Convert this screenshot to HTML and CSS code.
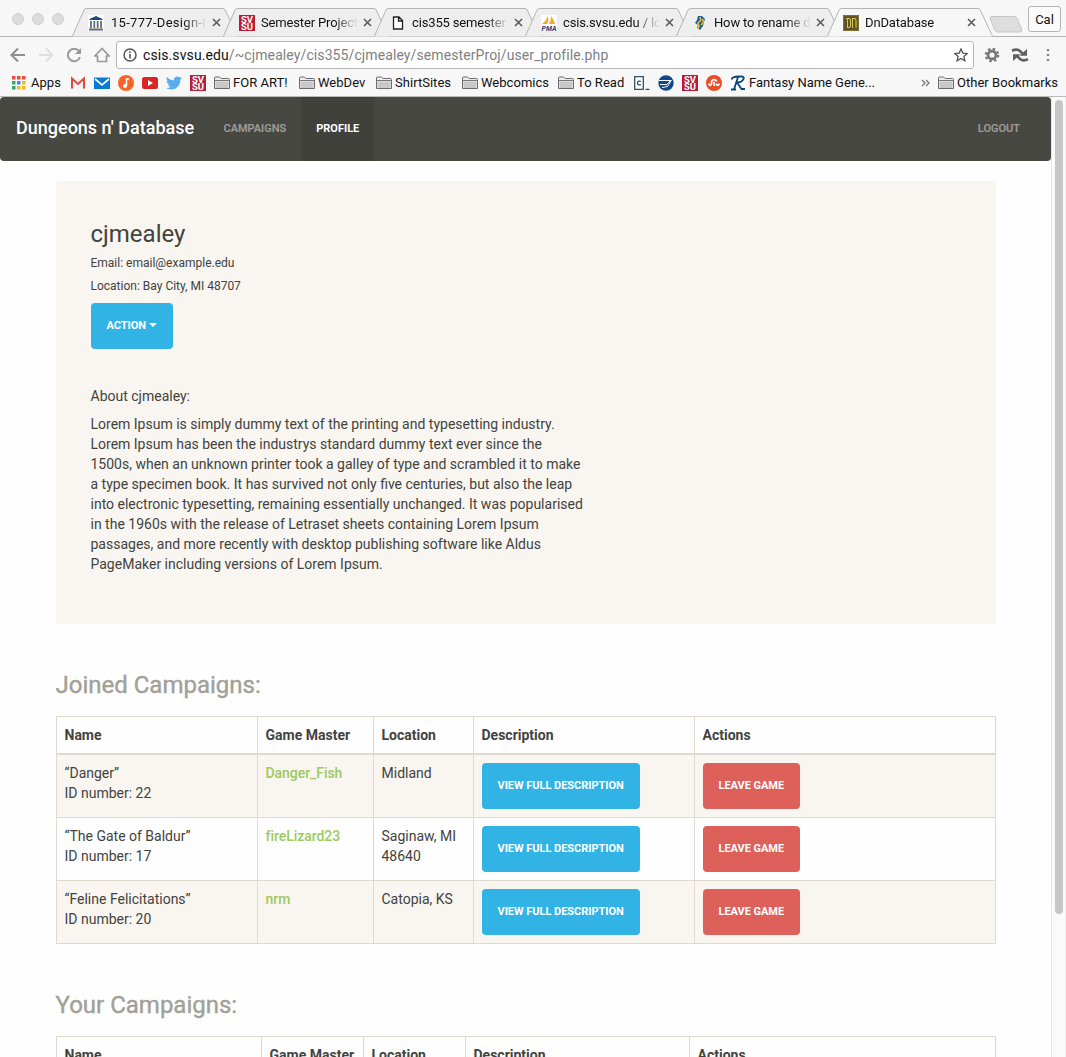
FILE: index.html
```html
<!DOCTYPE html>
<html lang="en">
<head>
<meta charset="utf-8">
<title>DnDatabase</title>
<link rel="stylesheet" href="styles.css">
</head>
<body>
<svg class="defs" width="0" height="0" aria-hidden="true">
  <symbol id="tab" viewBox="0 0 166 29"><path class="tab-fill" d="M0 28.500L12 2Q12.700 .5 14.500 .5H151Q152.500 .5 153.200 2L166 28.500Z"/><path d="M.3 28.500L12 2Q12.700 .5 14.500 .5H151Q152.500 .5 153.200 2L165.700 28.500" fill="none" stroke="#b3b3b3"/></symbol>
  <symbol id="close" viewBox="0 0 9 9"><path d="M1 1l7 7M8 1L1 8" stroke="#5c5c5c" stroke-width="1.600"/></symbol>
  <symbol id="folder" viewBox="0 0 16 14"><path d="M.5 12.500V2Q.5 1 1.500 1H5.500L7 2.500H14.500Q15.500 2.500 15.500 3.500V12.500Z" fill="#eee" stroke="#6b6b6b"/><path d="M1.500 5.500H14.500V12H1.500Z" fill="#c8c8c8"/><path d="M1 4.500H15" stroke="#777"/></symbol>
</svg>

<header class="browser">
  <div class="tabstrip">
    <div class="lights"><i></i><i></i><i></i></div>
    <div class="tabs">
      <div class="tab"><svg class="shape"><use href="#tab"/></svg>
        <svg class="fav" viewBox="0 0 16 16"><path fill="#fff" d="M0 0h16v16H0z"/><path d="M1 5Q2 3 5 2.500L8 1L11 2.500Q14 3 15 5Z" fill="#17497c"/><path d="M3 6v7M6.300 6v7M9.700 6v7M13 6v7" stroke="#607080" stroke-width="1.800"/><path d="M1 14.500h14" stroke="#666" stroke-width="2"/></svg>
        <span class="title t1">15-777-Design-I</span><svg class="x"><use href="#close"/></svg></div>
      <div class="tab"><svg class="shape"><use href="#tab"/></svg><svg class="fav svsu" viewBox="0 0 16 16"><path d="M0 0h16v16H0z"/><text x="2" y="7.500" textLength="12" lengthAdjust="spacingAndGlyphs">SV</text><text x="2" y="14.500" textLength="12" lengthAdjust="spacingAndGlyphs">SU</text></svg><span class="title">Semester Project</span><svg class="x"><use href="#close"/></svg></div>
      <div class="tab"><svg class="shape"><use href="#tab"/></svg>
        <svg class="fav" viewBox="0 0 16 16"><path d="M3.500 2H9L12.500 5.500V14H3.500ZM8.500 2V6H12.500" fill="#fff" stroke="#222" stroke-width="1.300"/></svg>
        <span class="title">cis355 semester</span><svg class="x"><use href="#close"/></svg></div>
      <div class="tab"><svg class="shape"><use href="#tab"/></svg>
        <svg class="fav" viewBox="0 0 16 16"><path fill="#fff" d="M0 0h16v16H0z"/><path d="M7 1Q8 6 6 9H1Q5 6 7 1ZM10 1Q13 5 14 9H8Q10 6 10 1Z" fill="#f7a724"/><text class="pma" x="0.500" y="16" textLength="15" lengthAdjust="spacingAndGlyphs">PMA</text></svg>
        <span class="title">csis.svsu.edu / lo</span><svg class="x"><use href="#close"/></svg></div>
      <div class="tab"><svg class="shape"><use href="#tab"/></svg>
        <svg class="fav" viewBox="0 0 16 16"><path d="M6 1h4l3 3-1 3-1 4-3 4-3-2 1-3-3-2 2-3z" fill="#17659b"/><path d="M8 2l1 3-3 3 1 3-1 3M11 4v4l-2 2" fill="none" stroke="#f2bb35" stroke-width="1.500"/></svg>
        <span class="title">How to rename d</span><svg class="x"><use href="#close"/></svg></div>
      <div class="tab active"><svg class="shape"><use href="#tab"/></svg>
        <svg class="fav" viewBox="0 0 16 16"><path fill="#5c4d29" d="M0 0h16v16H0z"/><path d="M.7.7h14.600v14.600H.7z" fill="none" stroke="#887939"/><path d="M3 3.500h3.500l1 1.500v6l-1 1.500H4.500V3.500M9.500 13V3.500h2.500l1 1.500v8" fill="none" stroke="#d6c64a" stroke-width="1.100"/></svg>
        <span class="title">DnDatabase</span><svg class="x"><use href="#close"/></svg></div>
    </div>
    <svg class="newtab" viewBox="0 0 34 17"><path d="M3 .5H25Q27.500 .5 28.500 3L32.500 13Q33.500 16 31 16H9Q6.500 16 5.500 13.500L1.200 3Q.3.5 3 .5Z" fill="#ddd" stroke="#c6c6c6"/></svg>
    <div class="user">Cal</div>
  </div>

  <div class="toolbar">
    <svg viewBox="0 0 16 16"><path d="M15 8H2M8 1.500L1.500 8L8 14.500" fill="none" stroke="#8e8e8e" stroke-width="2"/></svg>
    <svg viewBox="0 0 16 16"><path d="M1 8H14M8 1.500L14.500 8L8 14.500" fill="none" stroke="#dfdfdf" stroke-width="2"/></svg>
    <svg viewBox="0 0 16 16"><path d="M13 4.200A6.200 6.200 0 1 0 14 10" fill="none" stroke="#999" stroke-width="2"/><path d="M15 1V7H9Z" fill="#999"/></svg>
    <svg viewBox="0 0 16 16"><path d="M8 1.500L.9 9H3.500V14.500H12.500V9H15.100Z" fill="none" stroke="#999" stroke-width="1.700"/></svg>
    <div class="address">
      <svg viewBox="0 0 14 14"><circle cx="7" cy="7" r="6" fill="none" stroke="#555" stroke-width="1.500"/><path d="M7 6v4.500M7 3.300v1.700" stroke="#555" stroke-width="1.600"/></svg>
      <span class="url"><b>csis.svsu.edu</b>/~cjmealey/cis355/cjmealey/semesterProj/user_profile.php</span>
      <svg viewBox="0 0 14 14"><path d="M7 1L8.800 5.100L13.200 5.500L9.900 8.400L10.900 12.800L7 10.500L3.100 12.800L4.100 8.400L.8 5.500L5.200 5.100Z" fill="none" stroke="#555" stroke-width="1.300"/></svg>
    </div>
    <svg class="gear" viewBox="0 0 16 16"><circle cx="8" cy="8" r="4" fill="none" stroke="#777" stroke-width="2.800"/><circle cx="8" cy="8" r="6.200" fill="none" stroke="#777" stroke-width="2.200" stroke-dasharray="2.435"/></svg>
    <svg class="sync" viewBox="0 0 18 16"><path d="M1 3.700Q6 1.500 9 4L12.500 7.500M17 12.300Q12 14.500 9 12L5.500 8.500" fill="none" stroke="#606060" stroke-width="2.600"/><path d="M16 2V8.800H8.500ZM2 14V7.200H9.500Z" fill="#606060"/></svg>
    <svg class="dots" viewBox="0 0 4 14"><path d="M.8 1h2.400v2H.8zM.8 6h2.400v2H.8zM.8 11h2.400v2H.8z" fill="#858585"/></svg>
  </div>

  <nav class="bookmarks">
    <span><svg viewBox="0 0 14 14" class="apps"><path d="M0 0h3.500v3.500H0zM5 0h3.500v3.500H5zM10 0h3.500v3.500H10z" fill="#e94b3c"/><path d="M0 5h3.500v3.500H0z" fill="#36a565"/><path d="M5 5h3.500v3.500H5z" fill="#368df5"/><path d="M10 5h3.500v3.500H10zM5 10h3.500v3.500H5zM10 10h3.500v3.500H10z" fill="#f5b921"/><path d="M0 10h3.500v3.500H0z" fill="#36a565"/></svg><em>Apps</em></span>
    <span><svg viewBox="0 0 16 16"><path d="M2 3h12v10.500H2z" fill="#f2f2f2"/><path d="M2 13.500V3.500L8 9L14 3.500V13.500" fill="none" stroke="#db4b3f" stroke-width="2"/></svg></span>
    <span><svg viewBox="0 0 16 16"><path d="M0 2.500h16v11.500H0z" fill="#087ad0"/><path d="M1 4L8 10L15 4" fill="none" stroke="#fff" stroke-width="1.700"/></svg></span>
    <span><svg viewBox="0 0 16 16"><circle cx="8" cy="8" r="8" fill="#fa6426"/><path d="M8.500 11V4H11" fill="none" stroke="#fff" stroke-width="1.500"/><circle cx="7" cy="11" r="2" fill="#fff"/></svg></span>
    <span><svg viewBox="0 0 16 16"><rect y="2" width="16" height="12" rx="2.500" fill="#d92525"/><path d="M6 5v6l5-3z" fill="#fff"/></svg></span>
    <span><svg viewBox="0 0 24 24"><path d="M23.950 4.570a10 10 0 0 1-2.820.77 4.960 4.960 0 0 0 2.160-2.720c-.95.550-2 .950-3.130 1.180a4.920 4.920 0 0 0-8.380 4.480C7.690 8.090 4.070 6.130 1.640 3.160a4.820 4.820 0 0 0-.67 2.480c0 1.710.87 3.210 2.190 4.100a4.900 4.900 0 0 1-2.230-.62v.06a4.920 4.920 0 0 0 3.950 4.830 5 5 0 0 1-2.210.08 4.940 4.940 0 0 0 4.600 3.420A9.870 9.870 0 0 1 0 19.540a14 14 0 0 0 7.550 2.210c9.050 0 14-7.500 14-13.980l-.02-.63a10 10 0 0 0 2.420-2.570z" fill="#55acee"/></svg></span>
    <span><svg class="svsu" viewBox="0 0 16 16"><path d="M0 0h16v16H0z"/><text x="2" y="7.500" textLength="12" lengthAdjust="spacingAndGlyphs">SV</text><text x="2" y="14.500" textLength="12" lengthAdjust="spacingAndGlyphs">SU</text></svg></span>
    <span><svg class="folder"><use href="#folder"/></svg><em>FOR ART!</em></span>
    <span><svg class="folder"><use href="#folder"/></svg><em>WebDev</em></span>
    <span><svg class="folder"><use href="#folder"/></svg><em>ShirtSites</em></span>
    <span><svg class="folder"><use href="#folder"/></svg><em>Webcomics</em></span>
    <span><svg class="folder"><use href="#folder"/></svg><em>To Read</em></span>
    <span><svg viewBox="0 0 16 16"><path d="M.7 1.700h8.600v12.600H.7z" fill="#fff" stroke="#335064" stroke-width="1.300"/><path d="M7 6.500Q3.500 5.500 3.500 8t3.500 1.700M11.500 14.300h4" fill="none" stroke="#335064" stroke-width="1.300"/></svg></span>
    <span><svg viewBox="0 0 16 16"><circle cx="8" cy="8" r="7.700" fill="#10468a"/><path d="M1 5.500H12.500L9 9.500H2M4 12.500L9.500 11.500L13.500 5" fill="none" stroke="#fff"/></svg></span>
    <span><svg class="svsu" viewBox="0 0 16 16"><path d="M0 0h16v16H0z"/><text x="2" y="7.500" textLength="12" lengthAdjust="spacingAndGlyphs">SV</text><text x="2" y="14.500" textLength="12" lengthAdjust="spacingAndGlyphs">SU</text></svg></span>
    <span><svg viewBox="0 0 16 16"><circle cx="8" cy="8" r="8" fill="#eb4b27"/><path d="M3 8.500v.8q1.200 2 2.500 0V7q0-2.300 2.500-2.300T10.500 6.500M8 6.800v2.500q1 2 0 0M13 8.500v.8q-1.200 2-2.500 0V8.500" fill="none" stroke="#fff" stroke-width="1.700"/></svg></span>
    <span><svg viewBox="0 0 16 16"><path fill="#fff" d="M0 0h16v16H0z"/><path d="M1.500 4.500Q2.500 1.500 8 1.500H12Q15.500 2 12.500 5.500Q11 7.500 7 7.500L11.500 14H15M8 2L4 14.500M1 14.500h5" fill="none" stroke="#074778" stroke-width="1.800"/></svg><em class="tight">Fantasy Name Gene...</em></span>
    <span><svg viewBox="0 0 9 8" class="more"><path d="M1 1l3 3-3 3M5 1l3 3-3 3" fill="none" stroke="#777" stroke-width="1.300"/></svg></span>
    <span><svg class="folder"><use href="#folder"/></svg><em>Other Bookmarks</em></span>
  </nav>
</header>

<div class="viewport">
  <main class="page">
    <nav class="navbar"><a class="brand">Dungeons n' Database</a><a class="link">Campaigns</a><a class="link current">Profile</a><a class="link logout">Logout</a></nav>
    <div class="container">
      <section class="jumbotron">
        <h3>cjmealey</h3>
        <p class="small">Email: email@example.edu</p>
        <p class="small">Location: Bay City, MI 48707</p>
        <button class="btn info">Action <i class="caret"></i></button>
        <h5>About cjmealey:</h5>
        <p class="about">Lorem Ipsum is simply dummy text of the printing and typesetting industry.<br>Lorem Ipsum has been the industrys standard dummy text ever since the<br>1500s, when an unknown printer took a galley of type and scrambled it to make<br>a type specimen book. It has survived not only five centuries, but also the leap<br>into electronic typesetting, remaining essentially unchanged. It was popularised<br>in the 1960s with the release of Letraset sheets containing Lorem Ipsum<br>passages, and more recently with desktop publishing software like Aldus<br>PageMaker including versions of Lorem Ipsum.</p>
      </section>
      <h3 class="heading">Joined Campaigns:</h3>
      <table class="joined">
        <colgroup><col class="c1"><col class="c2"><col class="c3"><col class="c4"><col class="c5"></colgroup>
        <thead><tr><th>Name</th><th>Game Master</th><th>Location</th><th>Description</th><th>Actions</th></tr></thead>
        <tbody>
          <tr><td>“Danger”<br>ID number: 22</td><td><a>Danger_Fish</a></td><td>Midland</td><td><button class="btn info">View full description</button></td><td><button class="btn danger">Leave game</button></td></tr>
          <tr><td>“The Gate of Baldur”<br>ID number: 17</td><td><a>fireLizard23</a></td><td>Saginaw, MI 48640</td><td><button class="btn info">View full description</button></td><td><button class="btn danger">Leave game</button></td></tr>
          <tr><td>“Feline Felicitations”<br>ID number: 20</td><td><a>nrm</a></td><td>Catopia, KS</td><td><button class="btn info">View full description</button></td><td><button class="btn danger">Leave game</button></td></tr>
        </tbody>
      </table>
      <h3 class="heading">Your Campaigns:</h3>
      <table class="yours">
        <colgroup><col class="c1"><col class="c2"><col class="c3"><col class="c4"><col class="c5"></colgroup>
        <thead><tr><th>Name</th><th>Game Master</th><th>Location</th><th>Description</th><th>Actions</th></tr></thead>
      </table>
    </div>
  </main>
  <div class="scrollbar"><div class="thumb"></div></div>
</div>
</body>
</html>
```
FILE: styles.css
```css
* { box-sizing: border-box; }
html, body { height: 100%; }
body { margin: 0; overflow: hidden; background: #fefefe; color: #42433e; font: 14px/20px Roboto, sans-serif; display: flex; flex-direction: column; }
svg { display: block; flex: none; }
.defs { position: absolute; }

/* Browser window */
.browser { flex: none; height: 97px; background: #f7f7f7; border-bottom: 1px solid #b9bbb9; color: #111; }
.tabstrip { height: 37px; display: flex; align-items: flex-start; background: linear-gradient(#b3b3b3, #b3b3b3) 0 100% / 100% 1px no-repeat #f7f7f7; }
.lights { width: 72px; padding: 13px 0 0 12px; display: flex; gap: 8px; }
.lights i { width: 12px; height: 12px; border-radius: 50%; background: #dcdcdc; border: 1px solid #d0d0d0; }
.tabs { display: flex; padding-top: 8px; }
.tab { position: relative; width: 166px; height: 29px; margin-right: -15px; padding: 0 17px 0 16px; display: flex; align-items: center; }
.tab .shape { position: absolute; left: 0; top: 0; width: 166px; height: 29px; color: #eee; }
.tab-fill { fill: currentColor; }
.tab.active .shape { color: #f7f7f7; }
.fav { position: relative; width: 16px; height: 16px; }
.svsu { fill: #b91c35; }
.svsu text { fill: #fff; font: 700 8.6px Roboto, sans-serif; }
.pma { fill: #4c4b78; font: italic 900 6.8px Roboto, sans-serif; }
.title { position: relative; width: 97px; margin-left: 6px; overflow: hidden; white-space: nowrap; font-size: 13px; letter-spacing: -.15px; -webkit-mask-image: linear-gradient(90deg, #000 75%, transparent 100%); mask-image: linear-gradient(90deg, #000 75%, transparent 100%); }
.title.t1 { letter-spacing: .3px; margin-left: 7px; width: 96px; }
.x { position: relative; width: 9px; height: 9px; margin-left: 5.5px; }
.newtab { width: 34px; height: 17px; margin: 16px 0 0 11px; }
.user { width: 33px; height: 26px; margin: 6px 0 0 5px; border: 1px solid #b5b5b5; border-radius: 3px; background: #fbfbfb; text-align: center; font-size: 13px; line-height: 25px; }
.toolbar { height: 33px; padding: 4px 0 1px 10px; display: flex; align-items: center; gap: 12px; }
.toolbar > svg { width: 16px; height: 16px; }
.address { width: 858px; height: 28px; margin-left: -6px; padding: 0 5px 0 6px; border: 1px solid #b6b6b6; border-radius: 3px; background: #fff; display: flex; align-items: center; gap: 6px; }
.address svg { width: 14px; height: 14px; }
.url { flex: 1; color: #808080; font-size: 14px; white-space: nowrap; letter-spacing: .1px; }
.url b { font-weight: 400; color: #111; }
.toolbar .gear { margin-left: -2px; }
.toolbar .sync { width: 18px; margin-left: -1px; }
.toolbar .dots { width: 4px; height: 14px; margin-left: 5px; }
.bookmarks { height: 26px; padding-left: 12px; display: grid; grid-template-columns: 58px repeat(6, 24px) 85px 77px 86px 96px 76px repeat(4, 24px) 191px 17px 128px; align-items: center; }
.bookmarks span { display: flex; align-items: center; gap: 3px; }
.bookmarks svg { width: 16px; height: 16px; }
.bookmarks .apps { width: 14px; height: 14px; margin-right: 2px; }
.bookmarks .folder { height: 14px; }
.bookmarks .more { width: 9px; height: 8px; }
.bookmarks em { font-style: normal; font-size: 13px; letter-spacing: .03px; white-space: nowrap; }
.bookmarks .tight { letter-spacing: -.03px; }

/* Site */
.viewport { flex: 1; min-height: 0; display: flex; }
.page { width: 1051px; overflow: hidden; }
.navbar { height: 64px; border-radius: 4px; background: #484843; display: flex; font-weight: 500; }
.brand { width: 208.5px; padding: 21px 0 0 16px; font-size: 18px; color: #fff; white-space: nowrap; }
.link { padding: 22px 15px 21px; font-size: 11px; color: #9d9d96; text-transform: uppercase; -webkit-text-stroke: .2px #9d9d96; }
.current { background: #41413c; color: #fff; font-weight: 700; width: 73px; -webkit-text-stroke: 0; }
.logout { margin-left: auto; margin-right: 16px; }
.container { width: 940px; margin: 20px 0 0 56px; }
.jumbotron { height: 443px; border-radius: 4px; background: #f9f5f0; padding: 39px 34.5px; }
h3 { margin: 0; font-size: 24px; line-height: 28px; font-weight: 400; }
.small { margin: 0; font-size: 12px; line-height: 23px; }
.jumbotron h3 { margin-bottom: 4px; }
.btn { display: block; height: 46px; margin: 0; padding: 0 15.5px 1px; border: 0; border-radius: 4px; color: #fff; font: 700 11px/20px Roboto, sans-serif; text-transform: uppercase; text-align: left; white-space: nowrap; letter-spacing: -.03px; }
.info { background: #31b4e5; width: 158px; }
.danger { background: #de605b; width: 97px; }
.jumbotron .btn { width: 82px; margin: 5px 0 0 .5px; }
.caret { display: inline-block; border: 4px solid transparent; border-top-color: #fff; border-bottom: 0; vertical-align: 2px; }
h5 { margin: 37px 0 8px; font-size: 14px; line-height: 20px; font-weight: 400; }
.about { margin: 0; white-space: nowrap; }
.heading { margin: 47px 0 17px -.5px; color: #a1a197; -webkit-text-stroke: .4px #a1a197; }
table { width: 940px; table-layout: fixed; border-collapse: collapse; }
th, td { border: 1px solid #dfdace; padding: 8px 8px 8px 7.5px; text-align: left; vertical-align: top; }
td .btn { margin-left: .5px; padding: 1px 15.5px 0; }
th { border-bottom-width: 2px; font-weight: 700; height: 37px; padding-bottom: 7px; }
tbody tr { height: 63px; }
tbody tr:nth-child(odd) { background: #f9f5f0; }
td a { color: #9bca5d; font-weight: 500; letter-spacing: -.05px; }
.joined .c1 { width: 201px; }
.joined .c2 { width: 116px; }
.joined .c3 { width: 100px; }
.joined .c4 { width: 221px; }
.yours .c1 { width: 205px; }
.yours .c2, .yours .c3 { width: 102px; }
.yours .c4 { width: 224px; }
.scrollbar { width: 15px; padding: 3px 2px 0 3px; border-left: 1px solid #e7e7e7; border-right: 1px solid #eee; background: #fafafa; }
.thumb { width: 8px; height: 814px; border-radius: 4px; background: #c6c6c6; }
```
